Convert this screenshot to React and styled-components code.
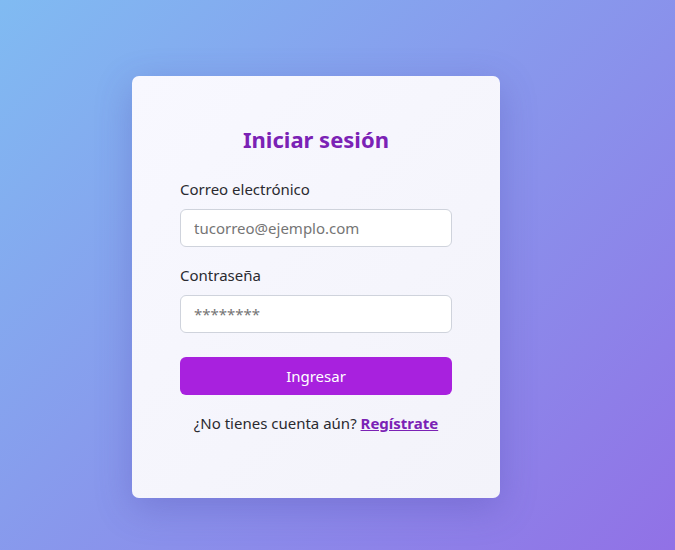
import React from 'react'
import styled, { createGlobalStyle } from 'styled-components'

const GlobalStyle = createGlobalStyle`
  html, body, #root {
    margin: 0;
    height: 100%;
  }

  body {
    font-family: 'Noto Sans', 'Open Sans', sans-serif;
  }
`

const Page = styled.div`
  min-height: 100%;
  box-sizing: border-box;
  display: flex;
  justify-content: center;
  padding: 76px 43px 0 0;
  background: linear-gradient(135deg, #80bbf2 0%, #9171e6 100%);
`

const Card = styled.form`
  width: 368px;
  height: 422px;
  box-sizing: border-box;
  padding: 47px 48px 0;
  border-radius: 7px;
  background: linear-gradient(135deg, #f8f8ff 0%, #f3f3fa 100%);
  box-shadow: 0 10px 36px rgba(70, 60, 160, 0.28);
  display: flex;
  flex-direction: column;
`

const Title = styled.h1`
  margin: 0 0 24px;
  text-align: center;
  font-size: 22px;
  font-weight: 700;
  color: #7b22b5;
  line-height: 32px;
`

const Field = styled.label`
  display: flex;
  flex-direction: column;
  gap: 10px;
  margin-bottom: 18px;
  font-size: 15px;
  color: #2a2a30;
  line-height: 20px;
`

const Input = styled.input`
  height: 38px;
  box-sizing: border-box;
  padding: 0 13px;
  border: 1px solid #cfd3dc;
  border-radius: 6px;
  background: #ffffff;
  font-family: inherit;
  font-size: 15px;
  color: #2a2a30;
  outline: none;

  ::placeholder {
    color: #7d8189;
  }
`

const Button = styled.button`
  margin-top: 6px;
  height: 38px;
  border: none;
  border-radius: 6px;
  background: #a821de;
  color: #ffffff;
  font-family: inherit;
  font-size: 15px;
  cursor: pointer;
`

const Footer = styled.p`
  margin: 18px 0 0;
  text-align: center;
  font-size: 15px;
  color: #2a2a30;

  a {
    color: #7b22b5;
    font-weight: 700;
    text-decoration: underline;
  }
`

export default function App() {
  return <>
    <GlobalStyle />
    <Page>
      <Card onSubmit={e => e.preventDefault()}>
        <Title>Iniciar sesión</Title>
        <Field>
          Correo electrónico
          <Input type='email' placeholder='tucorreo@ejemplo.com' />
        </Field>
        <Field>
          Contraseña
          <Input type='password' placeholder='********' />
        </Field>
        <Button type='submit'>Ingresar</Button>
        <Footer>¿No tienes cuenta aún? <a href='#'>Regístrate</a></Footer>
      </Card>
    </Page>
  </>
}
